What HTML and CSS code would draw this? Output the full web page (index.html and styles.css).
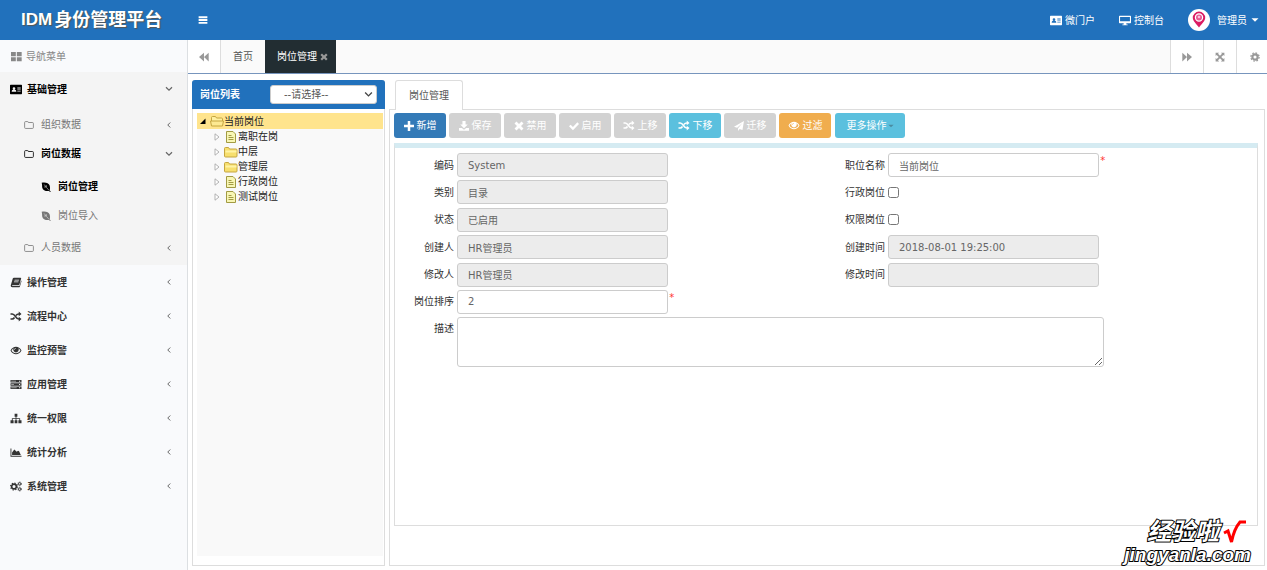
FILE: index.html
```html
<!DOCTYPE html>
<html lang="zh-CN">
<head>
<meta charset="utf-8">
<title>IDM身份管理平台</title>
<link rel="stylesheet" href="styles.css">
</head>
<body>
<svg class="sprite" aria-hidden="true">
  <symbol id="bars" viewBox="0 0 16 16"><path d="M1 2h14v3H1zM1 6.500h14v3H1zM1 11h14v3H1z"/></symbol>
  <symbol id="card" viewBox="0 0 18 16"><path fill-rule="evenodd" d="M1 1h16q1 0 1 1v12q0 1-1 1H1q-1 0-1-1V2q0-1 1-1zM6 4.500a2 2 0 1 0 0 4 2 2 0 0 0 0-4zM2.500 11.500h7q0-3-2-3h-3q-2 0-2 3zM11 5v1.500h5V5zM11 8v1.200h5V8zM11 10.500v1h5v-1z"/></symbol>
  <symbol id="monitor" viewBox="0 0 18 16"><path fill-rule="evenodd" d="M1 1h16q1 0 1 1v9q0 1-1 1h-6v2h2v1H5v-1h2v-2H1q-1 0-1-1V2q0-1 1-1zM1.600 2.600v6.400h14.800V2.600z"/></symbol>
  <symbol id="grid" viewBox="0 0 16 16"><path d="M0 1.500h7v6H0zM8.500 1.500h7v6h-7zM0 9h7v6H0zM8.500 9h7v6h-7z"/></symbol>
  <symbol id="folder" viewBox="0 0 16 16"><path fill="none" stroke="currentColor" stroke-width="1.300" d="M1 4q0-1.500 1.500-1.500h3Q7 2.500 7 4h6.500q1.500 0 1.500 1.500v6.500q0 1.500-1.500 1.500h-11Q1 13.500 1 12z"/></symbol>
  <symbol id="leaf" viewBox="0 0 16 16"><path d="M1 1c6-1 11.500 0 13 5 .7 2.500.5 5 0 7.500l1.700 1.500-1 1-2-1.500C7 15 3 13 2 9 1.500 6 2.100 4 1 1z"/><path d="M5 4q3 4 8 9.500M8.500 5v3M5 8h3" fill="none" stroke="#f4f4f4" stroke-width=".8"/></symbol>
  <symbol id="book" viewBox="0 0 16 16"><path fill-rule="evenodd" d="M5 1h9.500q1.300 0 1 1.300L13 11q-.4 1-1.500 1H3q-1 .2-.6 1h9.800q.8 0 1.100-.8L15.500 5q.7.500.4 1.600L13.600 14q-.4 1-1.500 1H2.500Q0 15 .3 12.500L3.300 2.300Q3.700 1 5 1zM6 4l-.3 1h6.500l.3-1zM5.200 6.500l-.3 1h6.500l.3-1z"/></symbol>
  <symbol id="shuffle" viewBox="0 0 16 16"><path fill="none" stroke="currentColor" stroke-width="2.300" d="M0 4.300h2.500C7 4.300 7.500 11.700 12 11.700h1M0 11.700h2.500C4 11.700 5 10.800 5.800 9.500M8 6.500C9 5 10 4.300 12 4.300h1"/><path d="M12 .8 16 4.300l-4 3.500zM12 8.200l4 3.500-4 3.500z"/></symbol>
  <symbol id="eye" viewBox="0 0 16 16"><path fill-rule="evenodd" d="M0 8c2-3.700 4.800-5.500 8-5.500s6 1.800 8 5.500c-2 3.700-4.800 5.500-8 5.500S2 11.700 0 8zm1.500 0c1.600 2.700 3.800 4 6.500 4s4.900-1.300 6.500-4Q13.300 6 11.500 4.900a4 4 0 1 1-7 0Q2.700 6 1.500 8zM8 4.200A2.600 2.600 0 0 0 5.400 6.800h1A1.700 1.700 0 0 1 8 5.100z"/></symbol>
  <symbol id="server" viewBox="0 0 16 16"><path d="M0 1.500h16v3.500H0zM0 6.300h16v3.500H0zM0 11h16v3.500H0z"/><path d="M1 3.200h7M1 8h4M1 12.700h8" stroke="#ccc" stroke-width="1"/><path d="M12.500 2.500H14V4h-1.500zM12.500 7.300H14v1.500h-1.500zM12.500 12H14v1.500h-1.500z" fill="#fff"/></symbol>
  <symbol id="sitemap" viewBox="0 0 16 16"><path d="M6 1h4v4.500H8.600v2H14v3h2V15h-4.500v-4.500h1.300V8.700H8.600v1.800H10V15H6v-4.500h1.400V8.700H3.200v1.800h1.300V15H0v-4.500h2v-3h5.400v-2H6z"/></symbol>
  <symbol id="area" viewBox="0 0 16 16"><path d="M0 2h1.300v10.700H16V14H0zM2.300 11.700V8l3.200-4.200L9 7l2-1.500 1.500.5L15 11.700z"/></symbol>
  <symbol id="cogs" viewBox="0 0 18 16"><circle cx="6" cy="8" r="3.500" fill="none" stroke="currentColor" stroke-width="2.400"/><circle cx="6" cy="8" r="5.200" fill="none" stroke="currentColor" stroke-width="1.600" stroke-dasharray="2 2.080"/><circle cx="14.500" cy="4" r="1.800" fill="none" stroke="currentColor" stroke-width="1.500"/><circle cx="14.500" cy="4" r="2.900" fill="none" stroke="currentColor" stroke-dasharray="1.500 1.500"/><circle cx="14.500" cy="12" r="1.800" fill="none" stroke="currentColor" stroke-width="1.500"/><circle cx="14.500" cy="12" r="2.900" fill="none" stroke="currentColor" stroke-dasharray="1.500 1.500"/></symbol>
  <symbol id="cog" viewBox="0 0 16 16"><circle cx="8" cy="8" r="4.200" fill="none" stroke="currentColor" stroke-width="3.400"/><circle cx="8" cy="8" r="6.600" fill="none" stroke="currentColor" stroke-width="2" stroke-dasharray="2.700 2.480"/></symbol>
  <symbol id="left" viewBox="0 0 16 16"><path fill="none" stroke="currentColor" stroke-width="2" d="M10.500 3 5.500 8l5 5"/></symbol>
  <symbol id="down" viewBox="0 0 16 16"><path fill="none" stroke="currentColor" stroke-width="2.400" d="m2 4.500 6 6 6-6"/></symbol>
  <symbol id="back" viewBox="0 0 16 16"><path d="M8 1v14L0 8zM15.500 1v14L8 8z"/></symbol>
  <symbol id="forward" viewBox="0 0 16 16"><path d="M.5 1v14L8 8zM8 1v14l8-7z"/></symbol>
  <symbol id="expand" viewBox="0 0 16 16"><path d="M1 1h5.500L4.800 2.700 8 6l3.200-3.300L9.500 1H15v5.500l-1.700-1.700L10 8l3.300 3.200L15 9.500V15H9.500l1.700-1.700L8 10l-3.200 3.300L6.500 15H1V9.500l1.700 1.700L6 8 2.700 4.800 1 6.500z"/></symbol>
  <symbol id="times" viewBox="0 0 16 16"><path d="M4 .8 8 4.800l4-4L15.200 4l-4 4 4 4-3.200 3.200-4-4-4 4L.8 12l4-4-4-4z"/></symbol>
  <symbol id="plus" viewBox="0 0 16 16"><path d="M6 0h4v6h6v4h-6v6H6v-6H0V6h6z"/></symbol>
  <symbol id="download" viewBox="0 0 16 16"><path d="M5.500 0h5v5.500H14l-6 6-6-6h3.500zM0 11h4.500L8 14l3.500-3H16v4.500H0z"/></symbol>
  <symbol id="check" viewBox="0 0 16 16"><path d="m0 8.500 2.600-2.600 3.700 3.700L13.400 2 16 4.600l-9.700 10.200z"/></symbol>
  <symbol id="plane" viewBox="0 0 16 16"><path d="M16 0 13.500 14.500 9 12.600 6.500 16v-4.500L13.500 3 5 10.800 0 9z"/></symbol>
  <symbol id="caret" viewBox="0 0 16 16"><path d="M1 4.500h14l-7 7z"/></symbol>
  <symbol id="tree-open" viewBox="0 0 8 8"><path d="M6.500 1.500V7H1z"/></symbol>
  <symbol id="tree-closed" viewBox="0 0 8 8"><path fill="#fff" stroke="#aaa" stroke-width=".9" d="M2 .8v6.400L6 4z"/></symbol>
  <symbol id="dir" viewBox="0 0 14 12"><path fill="#f7df6e" stroke="#c5a640" d="M.500 10V2.500q0-1 1-1h3l1 1.500h6.500q1 0 1 1V10q0 1-1 1h-10.500q-1 0-1-1z"/><path fill="#fff3a5" d="M1.500 4.500h11v2h-11z"/></symbol>
  <symbol id="dir-open" viewBox="0 0 14 12"><path fill="#fff0a0" stroke="#c5a640" d="M1.500 10.500V2.500q0-1 1-1h3l1 1.500h5q1 0 1 1v6.500z"/><path fill="#fde992" stroke="#c5a640" d="M.500 6h13l-1 5h-11z"/></symbol>
  <symbol id="doc" viewBox="0 0 12 12"><path fill="#f8f6b4" stroke="#a29b43" d="M1.500.500h6.500L10.500 3v8.500h-9z"/><path fill="none" stroke="#a29b43" d="M3.500 4.500h3M3.500 6.500h5M3.500 8.500h5"/></symbol>
</svg>

<header class="topbar">
  <h1 class="brand">IDM<span class="brand-name">身份管理平台</span></h1>
  <button class="menu-toggle" type="button" aria-label="菜单"><svg class="icon"><use href="#bars"/></svg></button>
  <nav class="top-links">
    <a class="top-link" href="#"><svg class="icon icon-wide"><use href="#card"/></svg>微门户</a>
    <a class="top-link" href="#"><svg class="icon icon-wide"><use href="#monitor"/></svg>控制台</a>
    <button class="user" type="button">
      <svg class="avatar" viewBox="0 0 22 22"><circle cx="11" cy="11" r="11" fill="#fff"/><path fill="#db1c63" d="M11 18.500C8 14.500 4.800 12 4.800 8.800a6.200 6.200 0 0 1 12.400 0c0 3.200-3.200 5.700-6.200 9.700z"/><circle cx="11" cy="8.500" r="3.600" fill="#e95a93" stroke="#fff" stroke-width="1.200"/><circle cx="11" cy="8" r="1.300" fill="#fbd"/></svg>
      管理员<svg class="icon-small"><use href="#caret"/></svg>
    </button>
  </nav>
</header>

<div class="shell">
  <aside class="sidebar">
    <div class="nav-title"><svg class="icon"><use href="#grid"/></svg>导航菜单</div>
    <ul class="nav">
      <li class="nav-open">
        <a class="nav-item" href="#"><svg class="icon icon-wide"><use href="#card"/></svg>基础管理<svg class="chevron"><use href="#down"/></svg></a>
        <ul class="subnav">
          <li><a class="sub-item" href="#"><svg class="icon"><use href="#folder"/></svg>组织数据<svg class="chevron"><use href="#left"/></svg></a></li>
          <li><a class="sub-item is-active" href="#"><svg class="icon"><use href="#folder"/></svg>岗位数据<svg class="chevron"><use href="#down"/></svg></a>
            <ul class="subnav">
              <li><a class="sub-item leaf-item is-active" href="#"><svg class="icon"><use href="#leaf"/></svg>岗位管理</a></li>
              <li><a class="sub-item leaf-item" href="#"><svg class="icon"><use href="#leaf"/></svg>岗位导入</a></li>
            </ul>
          </li>
          <li><a class="sub-item" href="#"><svg class="icon"><use href="#folder"/></svg>人员数据<svg class="chevron"><use href="#left"/></svg></a></li>
        </ul>
      </li>
      <li><a class="nav-item" href="#"><svg class="icon icon-wide"><use href="#book"/></svg>操作管理<svg class="chevron"><use href="#left"/></svg></a></li>
      <li><a class="nav-item" href="#"><svg class="icon icon-wide"><use href="#shuffle"/></svg>流程中心<svg class="chevron"><use href="#left"/></svg></a></li>
      <li><a class="nav-item" href="#"><svg class="icon icon-wide"><use href="#eye"/></svg>监控预警<svg class="chevron"><use href="#left"/></svg></a></li>
      <li><a class="nav-item" href="#"><svg class="icon icon-wide"><use href="#server"/></svg>应用管理<svg class="chevron"><use href="#left"/></svg></a></li>
      <li><a class="nav-item" href="#"><svg class="icon icon-wide"><use href="#sitemap"/></svg>统一权限<svg class="chevron"><use href="#left"/></svg></a></li>
      <li><a class="nav-item" href="#"><svg class="icon icon-wide"><use href="#area"/></svg>统计分析<svg class="chevron"><use href="#left"/></svg></a></li>
      <li><a class="nav-item" href="#"><svg class="icon icon-wide"><use href="#cogs"/></svg>系统管理<svg class="chevron"><use href="#left"/></svg></a></li>
    </ul>
  </aside>

  <main class="main">
    <div class="tabs">
      <button class="tab-tool tab-back" type="button" aria-label="向左"><svg class="icon"><use href="#back"/></svg></button>
      <button class="tab" type="button">首页</button>
      <button class="tab tab-active" type="button">岗位管理<svg class="tab-close"><use href="#times"/></svg></button>
      <span class="tabs-space"></span>
      <button class="tab-tool" type="button" aria-label="向右"><svg class="icon"><use href="#forward"/></svg></button>
      <button class="tab-tool" type="button" aria-label="全屏"><svg class="icon"><use href="#expand"/></svg></button>
      <button class="tab-tool tab-cog" type="button" aria-label="设置"><svg class="icon"><use href="#cog"/></svg></button>
    </div>

    <div class="workspace">
      <section class="tree-panel">
        <div class="tree-head">
          <label for="post-filter">岗位列表</label>
          <div class="select-wrap">
            <select class="select" id="post-filter"><option>--请选择--</option></select>
            <svg class="select-arrow"><use href="#down"/></svg>
          </div>
        </div>
        <ul class="tree">
          <li>
            <div class="node node-selected"><svg class="twist"><use href="#tree-open"/></svg><svg class="node-icon"><use href="#dir-open"/></svg>当前岗位</div>
            <ul class="tree-children">
              <li class="node"><svg class="twist"><use href="#tree-closed"/></svg><svg class="node-icon"><use href="#doc"/></svg>离职在岗</li>
              <li class="node"><svg class="twist"><use href="#tree-closed"/></svg><svg class="node-icon"><use href="#dir"/></svg>中层</li>
              <li class="node"><svg class="twist"><use href="#tree-closed"/></svg><svg class="node-icon"><use href="#dir"/></svg>管理层</li>
              <li class="node"><svg class="twist"><use href="#tree-closed"/></svg><svg class="node-icon"><use href="#doc"/></svg>行政岗位</li>
              <li class="node"><svg class="twist"><use href="#tree-closed"/></svg><svg class="node-icon"><use href="#doc"/></svg>测试岗位</li>
            </ul>
          </li>
        </ul>
      </section>

      <section class="detail">
        <div class="detail-tabs"><button class="detail-tab" type="button">岗位管理</button></div>
        <div class="detail-body">
          <div class="toolbar">
            <button class="btn btn-primary" type="button"><svg class="icon"><use href="#plus"/></svg>新增</button>
            <button class="btn" type="button" disabled><svg class="icon"><use href="#download"/></svg>保存</button>
            <button class="btn" type="button" disabled><svg class="icon"><use href="#times"/></svg>禁用</button>
            <button class="btn" type="button" disabled><svg class="icon"><use href="#check"/></svg>启用</button>
            <button class="btn" type="button" disabled><svg class="icon icon-wide"><use href="#shuffle"/></svg>上移</button>
            <button class="btn btn-info" type="button"><svg class="icon icon-wide"><use href="#shuffle"/></svg>下移</button>
            <button class="btn" type="button" disabled><svg class="icon"><use href="#plane"/></svg>迁移</button>
            <button class="btn btn-warning" type="button"><svg class="icon icon-wide"><use href="#eye"/></svg>过滤</button>
            <button class="btn btn-info btn-more" type="button">更多操作<svg class="more-caret"><use href="#caret"/></svg></button>
          </div>
          <form class="form">
            <div class="fields">
              <div class="field"><label for="code">编码</label><input class="input" id="code" value="System" disabled></div>
              <div class="field"><label for="title">职位名称</label><input class="input" id="title" value="当前岗位"><span class="required">*</span></div>
              <div class="field"><label for="kind">类别</label><input class="input" id="kind" value="目录" disabled></div>
              <div class="field"><label for="admin">行政岗位</label><input class="check" id="admin" type="checkbox"></div>
              <div class="field"><label for="state">状态</label><input class="input" id="state" value="已启用" disabled></div>
              <div class="field"><label for="auth">权限岗位</label><input class="check" id="auth" type="checkbox"></div>
              <div class="field"><label for="creator">创建人</label><input class="input" id="creator" value="HR管理员" disabled></div>
              <div class="field"><label for="created">创建时间</label><input class="input" id="created" value="2018-08-01 19:25:00" disabled></div>
              <div class="field"><label for="editor">修改人</label><input class="input" id="editor" value="HR管理员" disabled></div>
              <div class="field"><label for="edited">修改时间</label><input class="input" id="edited" disabled></div>
              <div class="field"><label for="order">岗位排序</label><input class="input" id="order" value="2"><span class="required">*</span></div>
            </div>
            <div class="field field-note"><label for="note">描述</label><textarea class="note" id="note"></textarea></div>
          </form>
        </div>
      </section>
    </div>
  </main>
</div>

<div class="watermark">
  <div class="mark-top"><span class="mark-text">经验啦</span><svg class="mark-check" viewBox="0 0 24 24"><path fill="none" stroke="#f00" stroke-width="3" d="m1 13 4-2L8.500 22Q11 9 17 2h6"/></svg></div>
  <div class="mark-text mark-url">jingyanla.com</div>
</div>
</body>
</html>
```
FILE: styles.css
```css
* { box-sizing: border-box; }

body {
  margin: 0;
  height: 100vh;
  display: flex;
  flex-direction: column;
  overflow: hidden;
  font: 10px/15px "DejaVu Sans", "Noto Sans CJK SC", sans-serif;
  color: #333;
  background: #fff;
}

ul { list-style: none; margin: 0; padding: 0; }
a { color: inherit; text-decoration: none; }
button, input, select, textarea { font: inherit; color: inherit; }
button { border: 0; padding: 0; background: none; }

.sprite { position: absolute; width: 0; height: 0; }
.icon { width: 10px; height: 10px; flex: none; fill: currentColor; }
.icon-wide { width: 12px; height: 11px; }
.icon-small { width: 8px; height: 8px; fill: currentColor; }

/* top bar */
.topbar {
  flex: none;
  display: flex;
  align-items: center;
  height: 40px;
  color: #fff;
  background: #2171bc;
}
.brand {
  width: 187px;
  margin: 0;
  padding-left: 21px;
  display: flex;
  gap: 2px;
  font: bold 17px/38px "Liberation Sans", "Noto Sans CJK SC", sans-serif;
  text-shadow: 1px 1px 1px #555;
}
.brand-name { font-size: 18px; }
.menu-toggle { display: flex; padding: 11px; }
.menu-toggle .icon { width: 10px; height: 10px; }
.top-links { margin-left: auto; display: flex; align-items: center; padding-right: 8px; gap: 24px; }
.top-link { display: flex; align-items: center; gap: 3px; }
.user { display: flex; align-items: center; gap: 4px; }
.avatar { width: 22px; height: 22px; margin-right: 3px; }

/* sidebar */
.shell { flex: 1; display: flex; min-height: 0; }
.sidebar { width: 188px; flex: none; background: #f9fafc; border-right: 1px solid #dcdfe2; }
.nav-title { height: 32px; display: flex; align-items: center; gap: 4px; padding-left: 11px; color: #888; }
.nav-title .icon { width: 11px; height: 11px; }
.nav-open { background: #f4f4f4; color: #000; }
.nav-item {
  display: flex;
  align-items: center;
  gap: 5px;
  height: 34px;
  padding: 0 14px 0 10px;
  font-weight: bold;
}
.chevron { width: 8px; height: 8px; margin-left: auto; color: #666; }
.subnav { padding: 4px 0 3px; }
.sub-item {
  display: flex;
  align-items: center;
  gap: 7px;
  height: 29px;
  padding: 0 14px 0 24px;
  color: #777;
}
.leaf-item { padding-left: 41px; }
.is-active { color: #000; font-weight: bold; }

/* page tabs */
.main { flex: 1; min-width: 0; display: flex; flex-direction: column; }
.tabs { flex: none; height: 34px; display: flex; background: #fafafa; border-bottom: 1px solid #7795bd; }
.tabs-space { flex: 1; }
.tab { padding: 0 12px; color: #555; }
.tab-active { display: flex; align-items: center; gap: 3px; padding: 0 8px 0 12px; color: #fff; background: #222d32; }
.tab-close { width: 8px; height: 8px; fill: #999; }
.tab-tool {
  display: flex;
  align-items: center;
  justify-content: center;
  width: 33px;
  color: #999;
  background: #fff;
  border-left: 1px solid #ddd;
}
.tab-back { border-left: 0; border-right: 1px solid #ddd; }
.tab-cog { width: 31px; justify-content: flex-end; padding-right: 7px; }

/* organisation tree */
.workspace { flex: 1; min-height: 0; display: flex; gap: 4px; padding: 6px 2px 4px 4px; }
.tree-panel {
  width: 193px;
  flex: none;
  display: flex;
  flex-direction: column;
  border: 1px solid #ddd;
  border-top: 0;
  border-radius: 3px 3px 0 0;
  padding-bottom: 9px;
}
.tree-head {
  display: flex;
  align-items: center;
  justify-content: space-between;
  height: 29px;
  margin: 0 -1px;
  padding: 0 8px;
  border-radius: 3px 3px 0 0;
  font-weight: bold;
  color: #fff;
  background: #2171bc;
}
.select-wrap { position: relative; display: flex; }
.select {
  appearance: none;
  width: 107px;
  height: 19px;
  padding: 0 13px;
  border: 1px solid #ccc;
  border-radius: 3px;
  font-weight: normal;
  color: #555;
  background: #fff;
}
.select-arrow { position: absolute; right: 4px; top: 5px; width: 9px; height: 9px; color: #444; pointer-events: none; }
.tree { flex: 1; margin: 4px 1px 0 4px; background: #f9f9f9; }
.node { display: flex; align-items: center; height: 15px; color: #222; }
.node-selected { height: 16px; padding-left: 2px; background: #ffe48d; }
.tree-children { padding-left: 16px; }
.twist { width: 8px; height: 8px; margin-right: 3px; }
.node-icon { width: 14px; height: 12px; }

/* detail */
.detail { flex: 1; min-width: 0; display: flex; flex-direction: column; }
.detail-tabs { display: flex; padding-left: 6px; }
.detail-tab {
  height: 30px;
  margin-bottom: -1px;
  padding: 0 13px;
  border: 1px solid #ddd;
  border-bottom: 0;
  border-radius: 3px 3px 0 0;
  color: #555;
  background: #fff;
  z-index: 1;
}
.detail-body {
  flex: 1;
  display: flex;
  flex-direction: column;
  padding: 3px 6px 39px 4px;
  border: 1px solid #ddd;
}
.toolbar { display: flex; gap: 3px; margin-bottom: 5px; }
.btn {
  display: flex;
  align-items: center;
  justify-content: center;
  gap: 3px;
  width: 52px;
  height: 25px;
  border-radius: 3px;
  color: #fff;
  background: #d2d2d2;
}
.btn-primary { background: #337ab7; }
.btn-info { background: #5bc0de; }
.btn-warning { background: #f0ad4e; }
.btn-more { width: 70px; margin-left: 1px; gap: 1px; }
.more-caret { width: 6px; height: 6px; fill: #4b8ba0; }

.form { flex: 1; border: 1px solid #ddd; border-top: 5px solid #d5ebf2; padding-top: 5px; }
.fields {
  display: grid;
  grid-template-columns: 1fr 1fr;
  grid-auto-rows: 24px;
  align-content: space-between;
  height: 161px;
}
.field { display: flex; align-items: center; }
.field label { width: 59px; margin-right: 3px; text-align: right; flex: none; }
.input {
  width: 49%;
  height: 24px;
  padding: 0 10px;
  border: 1px solid #ccc;
  border-radius: 3px;
  color: #666;
  background: #fff;
}
.input:disabled { background: #ececec; }
.check { width: 11px; height: 11px; margin: 0; }
.required { align-self: flex-start; padding-left: 1px; color: #f33; }
.field-note { align-items: flex-start; margin-top: 3px; }
.field-note label { padding-top: 4px; }
.note { width: 75%; height: 50px; border: 1px solid #ccc; border-radius: 3px; }

/* site mark laid over the page corner */
.watermark { position: absolute; right: 16px; bottom: 5px; }
.mark-top { display: flex; align-items: center; justify-content: flex-end; gap: 4px; padding-right: 4px; }
.mark-text {
  font: italic bold 24px/26px "Liberation Sans", "Noto Sans CJK SC", sans-serif;
  color: #fff;
  -webkit-text-stroke: 2px #000;
  paint-order: stroke fill;
}
.mark-url { font-size: 19px; line-height: 20px; }
.mark-check { width: 24px; height: 24px; }
```
